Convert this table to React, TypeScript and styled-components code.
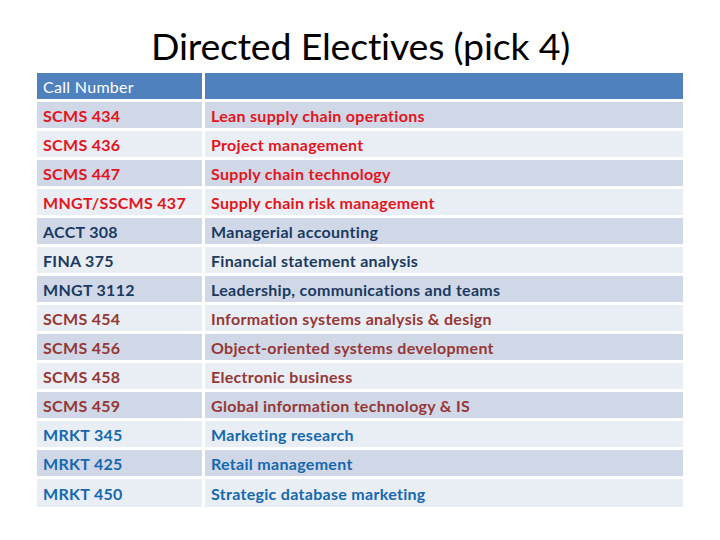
import React from "react";
import styled, { createGlobalStyle } from "styled-components";

const Global = createGlobalStyle`
  html, body { margin: 0; padding: 0; background: #ffffff; }
  body { font-family: Lato, "Open Sans", sans-serif; }
`;

const Page = styled.div`
  width: 720px;
  height: 540px;
  background: #ffffff;
  display: flex;
  flex-direction: column;
  align-items: flex-start;
`;

const Title = styled.h1`
  align-self: stretch;
  margin: 0;
  height: 73px;
  padding-top: 26px;
  padding-left: 1px;
  box-sizing: border-box;
  text-align: center;
  font-family: Lato, sans-serif;
  font-weight: 400;
  font-size: 37.5px;
  line-height: 40px;
  color: #000000;
  letter-spacing: -0.2px;
`;

const Table = styled.div`
  margin-left: 37px;
  width: 646px;
  display: flex;
  flex-direction: column;
  gap: 3px;
`;

const Row = styled.div<{ $tall?: boolean }>`
  display: grid;
  grid-template-columns: 165px 1fr;
  column-gap: 3px;
  height: ${(p) => (p.$tall ? "28px" : "26px")};
`;

const Cell = styled.div<{ $bg: string; $color: string; $bold: boolean }>`
  background: ${(p) => p.$bg};
  color: ${(p) => p.$color};
  font-weight: ${(p) => (p.$bold ? 700 : 400)};
  font-size: 16px;
  display: flex;
  align-items: center;
  padding-left: 6px;
  padding-top: 1px;
  box-sizing: border-box;
  white-space: nowrap;
  letter-spacing: 0.3px;
`;

type Course = { code: string; name: string; color: string };

const RED = "#e3141c";
const NAVY = "#1b3a60";
const BROWN = "#953735";
const BLUE = "#1568ae";

const courses: Course[] = [
  { code: "SCMS 434", name: "Lean supply chain operations", color: RED },
  { code: "SCMS 436", name: "Project management", color: RED },
  { code: "SCMS 447", name: "Supply chain technology", color: RED },
  { code: "MNGT/SSCMS 437", name: "Supply chain risk management", color: RED },
  { code: "ACCT 308", name: "Managerial accounting", color: NAVY },
  { code: "FINA 375", name: "Financial statement analysis", color: NAVY },
  { code: "MNGT 3112", name: "Leadership, communications and teams", color: NAVY },
  { code: "SCMS 454", name: "Information systems analysis & design", color: BROWN },
  { code: "SCMS 456", name: "Object-oriented systems development", color: BROWN },
  { code: "SCMS 458", name: "Electronic business", color: BROWN },
  { code: "SCMS 459", name: "Global information technology & IS", color: BROWN },
  { code: "MRKT 345", name: "Marketing research", color: BLUE },
  { code: "MRKT 425", name: "Retail management", color: BLUE },
  { code: "MRKT 450", name: "Strategic database marketing", color: BLUE },
];

export default function App() {
  return (
    <Page>
      <Global />
      <Title>Directed Electives (pick 4)</Title>
      <Table>
        <Row>
          <Cell $bg="#4f81bd" $color="#ffffff" $bold={false}>Call Number</Cell>
          <Cell $bg="#4f81bd" $color="#ffffff" $bold={false}></Cell>
        </Row>
        {courses.map((c, i) => {
          const bg = i % 2 === 0 ? "#d0d8e8" : "#e9edf4";
          return (
            <Row key={c.code} $tall={i === courses.length - 1}>
              <Cell $bg={bg} $color={c.color} $bold>{c.code}</Cell>
              <Cell $bg={bg} $color={c.color} $bold>{c.name}</Cell>
            </Row>
          );
        })}
      </Table>
    </Page>
  );
}
